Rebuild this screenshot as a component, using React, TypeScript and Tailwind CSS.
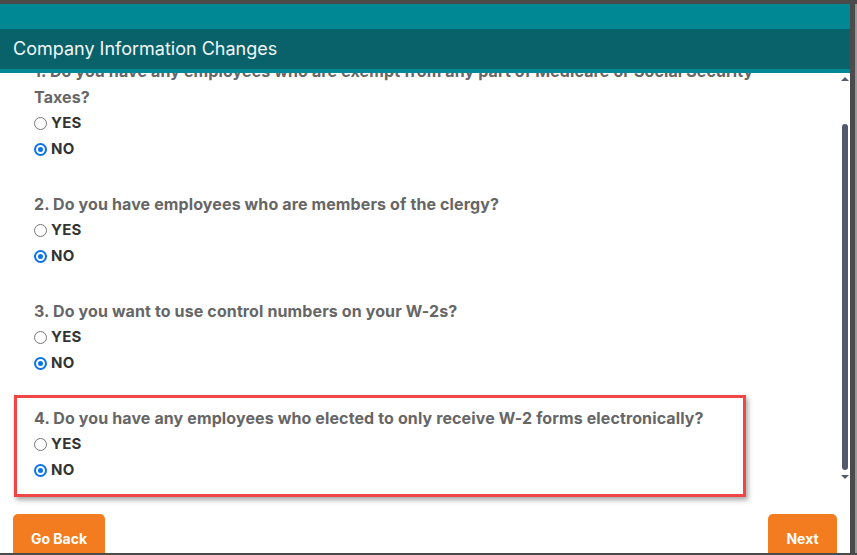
import React from "react";

const Radio = ({ checked, label }: { checked: boolean; label: string }) => (
  <label className="flex h-[26px] items-center">
    {checked ? (
      <span className="flex h-[13px] w-[13px] items-center justify-center rounded-full bg-[#0b72e8]">
        <span className="h-[9px] w-[9px] rounded-full border-[2px] border-white bg-[#0b72e8]" />
      </span>
    ) : (
      <span className="h-[13px] w-[13px] rounded-full border border-[#767676] bg-white" />
    )}
    <span className="ml-[4px] text-[15px] font-bold tracking-[0.2px] text-[#333333]">{label}</span>
  </label>
);

const Question = ({ text, answer }: { text: string; answer: "YES" | "NO" }) => (
  <div className="flex flex-col">
    <p className="text-[16px] font-bold leading-[26px] tracking-[0.12px] text-[#666666]">{text}</p>
    <Radio checked={answer === "YES"} label="YES" />
    <Radio checked={answer === "NO"} label="NO" />
  </div>
);

export default function App() {
  return (
    <div
      className="relative flex h-[555px] w-[857px] flex-col bg-[#4b4b4b]"
      style={{ fontFamily: "Inter, 'Liberation Sans', sans-serif" }}
    >
      <div className="h-[4px] shrink-0" />
      <div className="flex h-[549px] w-[857px] shrink-0">
        <div className="flex h-[549px] w-[850px] flex-col overflow-hidden bg-white">
          <div className="h-[25px] shrink-0 bg-[#008894]" />
          <div className="flex h-[40px] shrink-0 items-center bg-[#09616a] pb-[1px] pl-[13px]">
            <h1 className="text-[18px] font-normal text-[#f2f7f7]">Company Information Changes</h1>
          </div>
          <div className="h-[4px] shrink-0 bg-[#008894]" />
          <div className="flex h-[411px] shrink-0">
            <div className="flex-1 overflow-hidden pl-[34px] pr-[60px]">
              <div className="-mt-[15px] flex flex-col gap-[29px]">
                <Question
                  text="1. Do you have any employees who are exempt from any part of Medicare or Social Security Taxes?"
                  answer="NO"
                />
                <Question text="2. Do you have employees who are members of the clergy?" answer="NO" />
                <Question text="3. Do you want to use control numbers on your W-2s?" answer="NO" />
                <Question
                  text="4. Do you have any employees who elected to only receive W-2 forms electronically?"
                  answer="NO"
                />
              </div>
            </div>
            <div className="mr-[2px] flex w-[6px] flex-col items-center pt-[4px]">
              <span className="h-0 w-0 border-x-[4px] border-b-[4px] border-x-transparent border-b-[#525a6e]" />
              <span className="mt-[43px] h-[346px] w-[6px] rounded-full bg-[#525a6e]" />
              <span className="mt-[5px] h-0 w-0 border-x-[4px] border-t-[4px] border-x-transparent border-t-[#525a6e]" />
            </div>
          </div>
          <div className="flex flex-1 items-start justify-between px-[13px] pt-[30px]">
            <button className="flex h-[49px] w-[92px] items-center justify-center rounded-[5px] bg-[#f47c20] text-[14px] font-bold text-white">
              Go Back
            </button>
            <button className="flex h-[49px] w-[69px] items-center justify-center rounded-[5px] bg-[#f47c20] text-[14px] font-bold text-white">
              Next
            </button>
          </div>
        </div>
        <div className="w-[5px] bg-[#4b4b4b]" />
        <div className="w-[2px] bg-[#9a9a9a]" />
      </div>
      <div className="h-[2px] shrink-0 bg-[#4b4b4b]" />
      <div className="pointer-events-none absolute left-[14px] top-[395px] h-[102px] w-[732px] border-[3px] border-[#f14646] shadow-[2px_3px_5px_rgba(0,0,0,0.35)]" />
    </div>
  );
}
